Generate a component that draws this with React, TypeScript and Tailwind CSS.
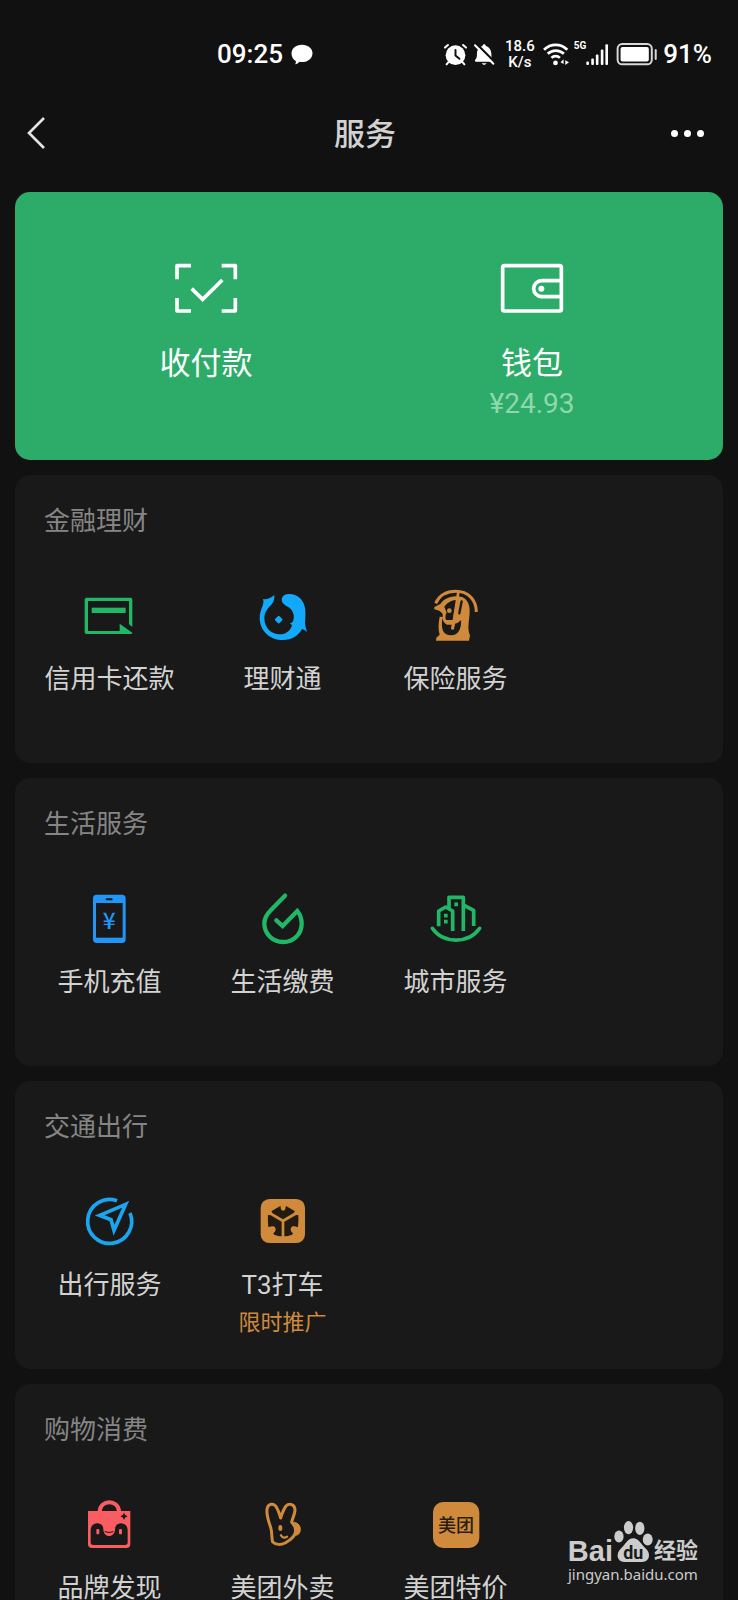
import type { ReactNode } from "react";

type Service = { label: string; icon: ReactNode; note?: string };
type Section = { title: string; items: Service[] };

const GREEN = "#20b767";
const ORANGE = "#cf8a3b";
const CARD = "#191919";

export default function App() {
  return (
    <div className="relative h-screen overflow-hidden bg-[#111111] font-[Roboto,'Noto_Sans_CJK_SC',sans-serif] text-[#d2d2d2]">
      <StatusBar />
      <header className="flex h-[50px] items-center justify-between pr-[34px] pl-[26px]">
        <button aria-label="返回" className="w-10">
          <svg viewBox="0 0 20 34" className="h-[34px] w-5" fill="none" stroke="#e4e4e4" strokeWidth="2.6">
            <path d="M18 2 3 17l15 15" />
          </svg>
        </button>
        <h1 className="pt-1 text-[31px] leading-[40px] font-medium">服务</h1>
        <button aria-label="更多" className="flex w-10 justify-end gap-[6px] *:size-[7px] *:shrink-0 *:rounded-full *:bg-white">
          <i />
          <i />
          <i />
        </button>
      </header>

      <main className="flex flex-col gap-[15px] px-[15px] pt-[34px]">
        <section className="grid grid-cols-2 rounded-[15px] bg-[#2dac69] px-7 pt-[70px] pb-9 text-white">
          <button className="flex flex-col items-center">
            <ScanPayIcon />
            <span className="mt-[29px] text-[31px] leading-[40px]">收付款</span>
          </button>
          <button className="flex flex-col items-center">
            <WalletIcon />
            <span className="mt-[29px] text-[31px] leading-[40px]">钱包</span>
            <span className="text-[28px] leading-[40px] text-[#8fd7ac]">¥24.93</span>
          </button>
        </section>

        {sections.map((s) => (
          <section key={s.title} className="rounded-[15px] bg-[#191919] pt-[27px] pb-[27px]">
            <h2 className="px-[29px] text-[26px] leading-[38px] text-[#858585]">{s.title}</h2>
            <div className="mt-12 grid grid-cols-4 px-2">
              {s.items.map((item) => (
                <ServiceItem key={item.label} item={item} />
              ))}
            </div>
          </section>
        ))}
      </main>

      <Watermark />
    </div>
  );
}

function ServiceItem({ item }: { item: Service }) {
  return (
    <button className="flex flex-col items-center whitespace-nowrap">
      {item.icon}
      <span className="mt-4 text-[26px] leading-[38px]">{item.label}</span>
      <span className="min-h-[38px] text-[22px] leading-[38px] text-[#cf8a3b]">{item.note}</span>
    </button>
  );
}

function StatusBar() {
  return (
    <div className="flex h-[108px] items-center justify-between pr-[26px] pl-[217px] text-white">
      <div className="flex items-center gap-2">
        <span className="text-[26px] leading-8 font-medium">09:25</span>
        <svg viewBox="272 70 66 64" className="h-[21px] w-[22px]" fill="white">
          <path d="M305 72c19 0 32 11 32 26s-13 27-32 27c-3 0-6 0-8-1-3 4-8 7-13 8 2-3 3-6 2-10-8-5-13-13-13-23 0-16 13-27 32-27z" />
        </svg>
      </div>
      <div className="flex items-center">
        <svg viewBox="40 66 70 68" className="h-[23px] w-[23px]" fill="none" stroke="white" strokeLinecap="round">
          <circle cx="75" cy="102" r="30" fill="white" stroke="none" />
          <path d="M43 79l9-8M107 79l-9-8M53 124l-5 6M97 124l5 6" strokeWidth="6" />
          <path d="M75 86v17l12 10" stroke="#111111" strokeWidth="6" />
        </svg>
        <svg viewBox="130 66 64 68" className="ml-[7px] h-[23px] w-[21px]">
          <path d="M156 74c0-7 10-7 10 0 12 4 17 14 17 26 0 10 1 15 5 22h-52c-4 0-4-3-2-6 5-6 5-10 5-18 0-11 5-20 17-24z" fill="white" />
          <path d="M154 127h14c-2 6-12 6-14 0z" fill="white" />
          <path d="M134 64l60 60" stroke="#111111" strokeWidth="7" />
          <path d="M133 72l56 56" stroke="white" strokeWidth="6" strokeLinecap="round" />
        </svg>
        <div className="ml-[10px] text-center text-[15px] leading-4 font-medium">
          <div>18.6</div>
          <div>K/s</div>
        </div>
        <svg viewBox="340 66 80 68" className="ml-2 h-[23px] w-[27px]" fill="none" stroke="white" strokeWidth="8">
          <path d="M343 86c20-19 49-19 69 0M354 98c14-13 34-13 48 0M365 110c7-7 18-7 25 0" />
          <circle cx="377" cy="125" r="7" fill="white" stroke="none" />
          <path d="M401 114v14l-9-5zM406 131v-14l11 6z" fill="white" stroke="none" />
        </svg>
        <span className="ml-1 self-start pt-[2px] text-[10px] leading-3 font-bold">5G</span>
        <svg viewBox="468 66 70 68" className="h-[23px] w-[23px]" fill="white">
          <rect x="469" y="121" width="8" height="11" rx="3" />
          <rect x="484" y="112" width="8" height="20" rx="3" />
          <rect x="498" y="100" width="8" height="32" rx="3" />
          <rect x="513" y="85" width="8" height="47" rx="3" />
          <rect x="527" y="69" width="8" height="63" rx="3" />
        </svg>
        <svg viewBox="559 66 126 70" className="ml-[7px] h-[23px] w-[42px]">
          <rect x="563" y="69" width="104" height="62" rx="14" fill="none" stroke="#d8d8d8" strokeWidth="6" />
          <rect x="572" y="78" width="86" height="44" rx="6" fill="white" />
          <rect x="676" y="84" width="6" height="34" rx="3" fill="#d8d8d8" />
        </svg>
        <span className="ml-[5px] text-[26px] leading-8 font-medium">91%</span>
      </div>
    </div>
  );
}

function ScanPayIcon() {
  return (
    <svg viewBox="99 66 198 159" className="h-[53px] w-[66px]" fill="none" stroke="white" strokeWidth="11" strokeLinejoin="round">
      <path d="M111 118V77h42M245 77h41v41M286 174v39h-41M153 213h-42v-39" />
      <path d="M155 146l33 32 59-58" strokeLinejoin="miter" />
    </svg>
  );
}

function WalletIcon() {
  return (
    <svg viewBox="1074 66 198 159" className="h-[53px] w-[66px]" fill="none" stroke="white" strokeWidth="11">
      <rect x="1085" y="77" width="176" height="136" rx="5" />
      <path d="M1261 122h-59a24 24 0 0 0 0 48h59" />
      <circle cx="1201" cy="146" r="9" fill="white" stroke="none" />
    </svg>
  );
}

function CreditCardIcon() {
  return (
    <svg viewBox="155 294 168 168" className="size-14" fill={GREEN}>
      <path d="M169 323h132q5 0 5 5v83l-10-8v-70H173v90h95v-22l38 27q0 4-5 4H168q-5 0-5-5V328q0-5 6-5z" />
      <rect x="184" y="353" width="102" height="16" />
    </svg>
  );
}

function FishIcon() {
  return (
    <svg viewBox="46 54 168 168" className="size-14" fill="#12a9fb">
      <path d="M70 87q18 3 34-12c1 16-4 26-15 35-9 9-15 20-15 34 0 28 20 49 46 49 20 0 34-13 37-29l-7-3q7-2 11-9c5-21-3-34-17-42-14-7-20-16-17-26 3-9 12-13 24-12 28 2 44 23 46 48 1 15 0 25-1 39q1 13 6 27-7-8-15-9c-11 20-30 33-57 33-40 0-70-28-70-67 0-15 5-26 9-36 3-8 3-12 1-20z" />
      <path d="M117 140l9 9-9 9-9-9z" stroke="#12a9fb" strokeWidth="5" strokeLinejoin="round" />
    </svg>
  );
}

function InsuranceIcon() {
  return (
    <svg viewBox="565 54 168 168" className="size-14" fill="none" stroke={ORANGE}>
      <path d="M588 100c12-25 34-36 60-36 38 0 62 26 62 62" strokeWidth="9" />
      <path
        d="M584 111l18-9c10-15 28-23 52-23 26 1 37 21 36 47-1 25-8 52 1 70l-3 16h-99l1-9 10-9c-5-16-4-34 0-54l9 1v-9c-5-8-14-12-25-14z"
        fill={ORANGE}
        stroke="none"
      />
      <path d="M614 110c8-12 20-19 36-20l-11 60h-20c-3-8-2-16 2-22z" fill={CARD} stroke="none" />
      <path d="M608 144c2 10 6 16 14 20h14l-2 14h8l3-16c8-2 14-6 19-12 2 26-8 46-30 46-22 0-31-16-26-52z" fill={CARD} stroke="none" />
      <path d="M666 94l-7 36" stroke={CARD} strokeWidth="7" strokeLinecap="round" />
      <circle cx="629" cy="122" r="7" fill={ORANGE} stroke="none" />
      <path d="M656 66l-17 112" strokeWidth="8" />
      <path d="M620 155h24" strokeWidth="8" />
    </svg>
  );
}

function PhoneIcon() {
  return (
    <svg viewBox="126 62 168 168" className="size-14">
      <rect x="159" y="73" width="98" height="145" rx="11" fill="#2196f8" />
      <rect x="168" y="98" width="80" height="104" fill={CARD} />
      <rect x="197" y="84" width="21" height="6" rx="3" fill={CARD} />
      <text x="208" y="177" textAnchor="middle" fontSize="68" fontWeight="500" fill="#2196f8" className="font-['Noto_Sans_CJK_SC',sans-serif]">¥</text>
    </svg>
  );
}

function DropIcon() {
  return (
    <svg viewBox="644 62 168 168" className="size-14" fill="none" stroke={GREEN} strokeWidth="13">
      <path d="M734 76l-42 43c-13 13-20 24-20 40 0 31 24 56 56 56s56-24 56-55c0-14-4-27-13-38l-44 45-19-17" strokeLinecap="round" />
    </svg>
  );
}

function CityIcon() {
  return (
    <svg viewBox="143 62 168 168" className="size-14" fill="none" stroke={GREEN} strokeWidth="11">
      <path d="M156 174c32 47 110 47 142 0" strokeLinecap="round" />
      <path d="M175 168v-46l21-12 21 12v60" strokeLinejoin="round" />
      <path d="M206 114V81h43v101M249 104l31 16v47" strokeLinejoin="round" />
      <path d="M222 102h11M191 136h11M191 154h11" />
    </svg>
  );
}

function CompassIcon() {
  return (
    <svg viewBox="127 42 168 168" className="size-14" fill="none" stroke="#1ca4ee" strokeWidth="11">
      <path d="M232 62a66 66 0 1 0 39 37" />
      <path d="M258 73l-78 33 34 13 9 32z" />
    </svg>
  );
}

function T3Icon() {
  return (
    <svg viewBox="645 42 168 168" className="size-14" fill="#241b10">
      <rect x="662" y="57" width="133" height="132" rx="26" fill={ORANGE} />
      <path d="M695 93l26-15c2 2 0 8 3 11 3 4 8 4 11 0s1-9 3-11l26 15c1 5-5 7-8 9l-27 16-27-16c-4-2-8-4-7-9z" />
      <path d="M684 106c4-2 8-1 12 2l29 17v43c-8 2-17-1-25-6 1-6 7-7 7-13 0-7-4-11-9-10-6 0-9 3-13 1-1-11-2-22-1-34z" />
      <path d="M775 106c-4-2-8-1-12 2l-30 17v43c8 2 18-1 26-6-1-6-7-7-7-13 0-7 4-11 9-10 6 0 9 3 13 1 1-11 2-22 1-34z" />
    </svg>
  );
}

function BagIcon() {
  return (
    <svg viewBox="126 51 168 168" className="size-14" fill="#f95d62">
      <path d="M179 94c2-36 56-36 58 0" fill="none" stroke="#f95d62" strokeWidth="12" />
      <path d="M144 93h127v99q0 12-12 12H156q-12 0-12-12z" />
      <path d="M152 151c0-28 38-28 38-3 0 26 35 26 35 0 0-25 38-25 38 3v36q0 8-8 8h-95q-8 0-8-8z" fill={CARD} />
      <ellipse cx="207" cy="156" rx="14" ry="12" />
      <path d="M194 155q13 5 26 0" fill="none" stroke={CARD} strokeWidth="3" />
      <rect x="169" y="147" width="9" height="16" rx="3" />
      <rect x="237" y="147" width="9" height="16" rx="3" />
      <path d="M252 98q2 9 11 11-9 2-11 11-2-9-11-11 9-2 11-11z" fill={CARD} />
    </svg>
  );
}

function RabbitIcon() {
  return (
    <svg viewBox="644 51 168 168" className="size-14" fill="none" stroke={ORANGE} strokeWidth="9" strokeLinecap="round" strokeLinejoin="round">
      <path d="M697 186c-4-14-1-28-6-44-6-17-13-35-11-54 3-18 20-20 28-7 6 10 10 22 13 33 4-13 8-26 16-36 10-10 27-5 27 13-1 13-8 24-10 36 9 8 14 22 10 34-5 14-17 20-30 28-12 6-28 6-37-3z" />
      <path d="M762 127c12 2 18 11 18 21 0 11-6 18-15 18 3-14 3-26-3-39z" fill={ORANGE} strokeWidth="3" />
      <ellipse cx="720" cy="144" rx="6" ry="9" fill={ORANGE} stroke="none" />
      <path d="M722 166c4 8 12 9 18 4" strokeWidth="7" />
    </svg>
  );
}

function MeituanIcon() {
  return (
    <svg viewBox="143 48 168 168" className="size-14">
      <rect x="158" y="63" width="139" height="138" rx="30" fill={ORANGE} />
      <text x="227" y="152" textAnchor="middle" fontSize="54" fontWeight="500" fill="#2a1d0e">美团</text>
    </svg>
  );
}

function Watermark() {
  return (
    <div className="absolute right-10 bottom-4 flex flex-col items-center text-[#cccccc]">
      <div className="flex items-end">
        <span className="font-['Liberation_Sans',sans-serif] text-[29px] leading-[26px] font-bold">Bai</span>
        <svg viewBox="691 120 122 130" className="mb-px h-[43px] w-[41px]" fill="#cccccc">
          <ellipse cx="708" cy="170" rx="14" ry="18" />
          <ellipse cx="737" cy="143" rx="14" ry="20" />
          <ellipse cx="771" cy="145" rx="14" ry="20" />
          <ellipse cx="795" cy="179" rx="15" ry="18" />
          <path d="M751 175c-17 0-22 18-37 31-16 14-13 40 10 41h54c24-1 27-27 11-41-15-13-21-31-38-31z" />
          <text x="751" y="237" textAnchor="middle" fontSize="54" fontWeight="700" fill={CARD}>du</text>
        </svg>
        <span className="text-[22px] leading-[26px] font-bold">经验</span>
      </div>
      <span className="font-['Noto_Sans',sans-serif] text-[15px] leading-5">jingyan.baidu.com</span>
    </div>
  );
}

const sections: Section[] = [
  {
    title: "金融理财",
    items: [
      { label: "信用卡还款", icon: <CreditCardIcon /> },
      { label: "理财通", icon: <FishIcon /> },
      { label: "保险服务", icon: <InsuranceIcon /> },
    ],
  },
  {
    title: "生活服务",
    items: [
      { label: "手机充值", icon: <PhoneIcon /> },
      { label: "生活缴费", icon: <DropIcon /> },
      { label: "城市服务", icon: <CityIcon /> },
    ],
  },
  {
    title: "交通出行",
    items: [
      { label: "出行服务", icon: <CompassIcon /> },
      { label: "T3打车", icon: <T3Icon />, note: "限时推广" },
    ],
  },
  {
    title: "购物消费",
    items: [
      { label: "品牌发现", icon: <BagIcon /> },
      { label: "美团外卖", icon: <RabbitIcon /> },
      { label: "美团特价", icon: <MeituanIcon /> },
    ],
  },
];
